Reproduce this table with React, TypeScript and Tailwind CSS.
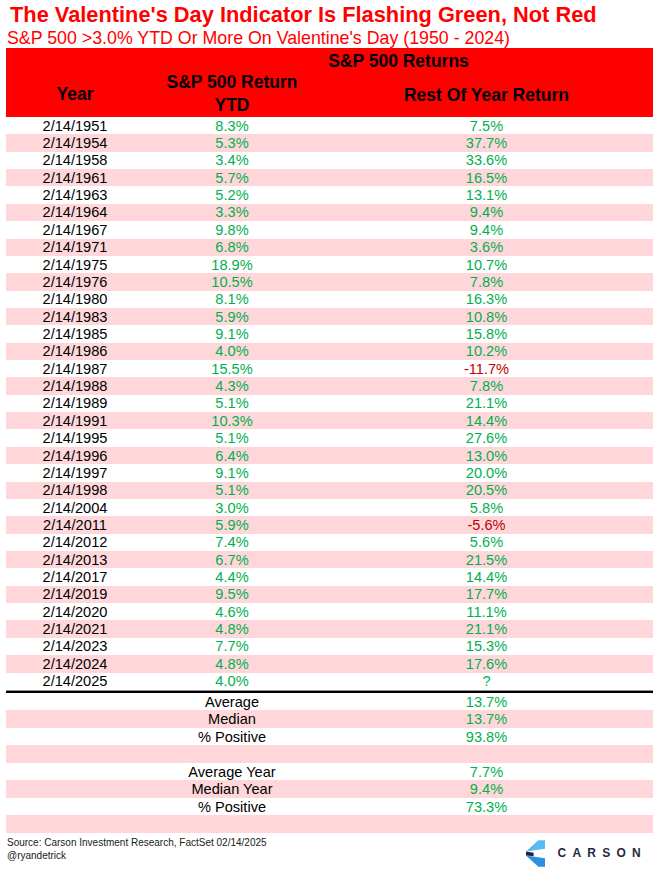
import React from "react";

const rows: [string, string, string][] = [
  ["1951", "8.3%", "7.5%"],
  ["1954", "5.3%", "37.7%"],
  ["1958", "3.4%", "33.6%"],
  ["1961", "5.7%", "16.5%"],
  ["1963", "5.2%", "13.1%"],
  ["1964", "3.3%", "9.4%"],
  ["1967", "9.8%", "9.4%"],
  ["1971", "6.8%", "3.6%"],
  ["1975", "18.9%", "10.7%"],
  ["1976", "10.5%", "7.8%"],
  ["1980", "8.1%", "16.3%"],
  ["1983", "5.9%", "10.8%"],
  ["1985", "9.1%", "15.8%"],
  ["1986", "4.0%", "10.2%"],
  ["1987", "15.5%", "-11.7%"],
  ["1988", "4.3%", "7.8%"],
  ["1989", "5.1%", "21.1%"],
  ["1991", "10.3%", "14.4%"],
  ["1995", "5.1%", "27.6%"],
  ["1996", "6.4%", "13.0%"],
  ["1997", "9.1%", "20.0%"],
  ["1998", "5.1%", "20.5%"],
  ["2004", "3.0%", "5.8%"],
  ["2011", "5.9%", "-5.6%"],
  ["2012", "7.4%", "5.6%"],
  ["2013", "6.7%", "21.5%"],
  ["2017", "4.4%", "14.4%"],
  ["2019", "9.5%", "17.7%"],
  ["2020", "4.6%", "11.1%"],
  ["2021", "4.8%", "21.1%"],
  ["2023", "7.7%", "15.3%"],
  ["2024", "4.8%", "17.6%"],
  ["2025", "4.0%", "?"],
];

const summary: [string, string][] = [
  ["Average", "13.7%"],
  ["Median", "13.7%"],
  ["% Positive", "93.8%"],
  ["", ""],
  ["Average Year", "7.7%"],
  ["Median Year", "9.4%"],
  ["% Positive", "73.3%"],
  ["", ""],
];

const CarsonLogo = () => (
  <div className="flex items-center gap-[13px]">
    <svg width="19" height="27" viewBox="0 0 20 28">
      <polygon points="13,0 20,0 20,9 0,12" fill="#5ab8f5" />
      <polygon points="0,12 8,13.2 8,16.8 0,16" fill="#1b2940" />
      <polygon points="0,16 20,19 20,28 13,28" fill="#2b8fe2" />
    </svg>
    <span className="text-[12px] font-semibold tracking-[0.52em] text-[#1e2b3c]">
      CARSON
    </span>
  </div>
);

export default function App() {
  return (
    <div
      className="w-[658px] h-[882px] bg-white overflow-hidden"
      style={{ fontFamily: '"Liberation Sans", Arial, sans-serif' }}
    >
      <div className="pl-[10px] pt-[3px] text-[21.8px] leading-[24px] font-bold text-[#ff0000] whitespace-nowrap">
        The Valentine's Day Indicator Is Flashing Green, Not Red
      </div>
      <div className="pl-[7px] pt-[2px] text-[17.8px] leading-[19px] text-[#ff0000] whitespace-nowrap">
        S&amp;P 500 &gt;3.0% YTD Or More On Valentine's Day (1950 - 2024)
      </div>

      <div className="ml-[6px] w-[647px]">
        {/* header */}
        <div className="flex h-[69px] bg-[#ff0000] text-black font-bold text-[17.5px] leading-[23px]">
          <div className="w-[138px] flex justify-center pt-[35px]">Year</div>
          <div className="flex-1 flex flex-col">
            <div className="h-[26px] flex items-center justify-center pt-[1px]">
              S&amp;P 500 Returns
            </div>
            <div className="flex flex-1">
              <div className="w-[176px] flex flex-col items-center -mt-[3px] whitespace-nowrap">
                <span>S&amp;P 500 Return</span>
                <span>YTD</span>
              </div>
              <div className="flex-1 flex items-center justify-center">
                Rest Of Year Return
              </div>
            </div>
          </div>
        </div>

        {/* body */}
        <div className="text-[14.6px] leading-[17px]">
          {rows.map(([y, ytd, rest], i) => (
            <div
              key={y}
              className={`flex h-[17.36px] items-center pt-[1px] ${
                i % 2 === 1 ? "bg-[#ffd7da]" : "bg-white"
              }`}
            >
              <div className="w-[138px] text-center text-black">2/14/{y}</div>
              <div className="w-[176px] text-center text-[#00b050]">{ytd}</div>
              <div
                className={`flex-1 text-center ${
                  rest.startsWith("-") ? "text-[#c00000]" : "text-[#00b050]"
                }`}
              >
                {rest}
              </div>
            </div>
          ))}
          <div className="border-t border-[#8c8c8c] border-b-2 border-b-black" />
          {summary.map(([label, val], i) => (
            <div
              key={i}
              className={`flex h-[17.5px] items-center pt-[1px] ${
                i % 2 === 1 ? "bg-[#ffd7da]" : "bg-white"
              }`}
            >
              <div className="w-[138px]" />
              <div className="w-[176px] text-center text-black">{label}</div>
              <div className="flex-1 text-center text-[#00b050]">{val}</div>
            </div>
          ))}
        </div>
      </div>

      {/* footer */}
      <div className="flex justify-between pl-[7px] pr-[11px] pt-[3px]">
        <div className="text-[10px] leading-[13px] text-[#1a1a1a]">
          <div>Source: Carson Investment Research, FactSet 02/14/2025</div>
          <div>@ryandetrick</div>
        </div>
        <div className="pt-[4px]">
          <CarsonLogo />
        </div>
      </div>
    </div>
  );
}
